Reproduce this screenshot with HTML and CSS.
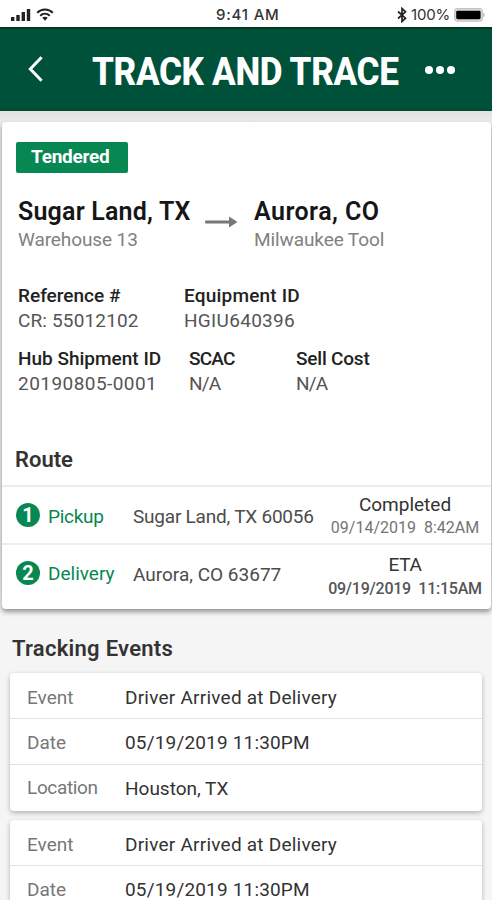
FILE: index.html
```html
<!DOCTYPE html>
<html lang="en">
<head>
    <meta charset="UTF-8">
    <meta name="viewport" content="width=device-width, initial-scale=1.0">
    <title>Track and Trace</title>
    <link rel="stylesheet" href="styles.css">
</head>
<body>

<!-- Status bar -->
<div class="status-bar">
    <div class="signal">
        <svg class="bars" width="20" height="14" viewBox="0 0 20 14">
            <rect x="0" y="9" width="3.4" height="4"/>
            <rect x="5.3" y="7" width="3.4" height="6"/>
            <rect x="10.6" y="4" width="3.4" height="9"/>
            <rect x="15.8" y="1" width="3.4" height="12"/>
        </svg>
        <svg class="wifi" width="18" height="13" viewBox="0 0 18 13" fill="none" stroke="#222" stroke-width="2">
            <path d="M1.2 4.8C5.5 .4 12.5 .4 16.8 4.8"/>
            <path d="M4.2 7.8C7 5.2 11 5.2 13.8 7.8"/>
            <path d="M6.3 9.8Q9 7.5 11.7 9.8L9 12.8z" fill="#222" stroke="none"/>
        </svg>
    </div>
    <span class="clock">9:41 AM</span>
    <div class="power">
        <svg width="10" height="16" viewBox="0 0 10 16" fill="none" stroke="#222" stroke-width="1.7">
            <path d="M1 4.5L8.5 11.2L5 14.5V1.5L8.5 4.8L1 11.5"/>
        </svg>
        <span class="percent">100%</span>
        <svg width="32" height="14" viewBox="0 0 32 14">
            <rect x=".7" y=".7" width="27.6" height="12.4" rx="2.5" fill="#ddd" stroke="#c4c4c4" stroke-width="1.2"/>
            <rect x="2.2" y="2.8" width="24.4" height="8.4" rx="1.4" fill="#000"/>
            <path d="M29.3 4.5Q32 7 29.3 9.5z" fill="#aaa"/>
        </svg>
    </div>
</div>

<!-- Header -->
<div class="header">
    <svg class="back" width="16" height="26" viewBox="0 0 16 26" fill="none" stroke="#fff" stroke-width="3">
        <path d="M14.6 1.2L3.3 13L14.6 24.8"/>
    </svg>
    <h1>TRACK AND TRACE</h1>
    <div class="more"><i></i><i></i><i></i></div>
</div>

<!-- Shipment -->
<div class="panel">
<div class="card shipment">
    <span class="badge">Tendered</span>

    <div class="places">
        <div class="place from">
            <h2>Sugar Land, TX</h2>
            <p>Warehouse 13</p>
        </div>
        <svg class="arrow" width="34" height="12" viewBox="0 0 34 12" fill="#777">
            <rect x="0" y="4.4" width="26" height="3" rx="1"/>
            <path d="M24 .6L32.5 6L24 11.4z"/>
        </svg>
        <div class="place to">
            <h2>Aurora, CO</h2>
            <p>Milwaukee Tool</p>
        </div>
    </div>

    <div class="details two">
        <div>
            <h3>Reference #</h3>
            <p class="cr">CR: 55012102</p>
        </div>
        <div>
            <h3 class="equipment">Equipment ID</h3>
            <p class="equipment-id">HGIU640396</p>
        </div>
    </div>
    <div class="details three">
        <div>
            <h3>Hub Shipment ID</h3>
            <p class="hub-id">20190805-0001</p>
        </div>
        <div>
            <h3 class="scac">SCAC</h3>
            <p class="na">N/A</p>
        </div>
        <div>
            <h3 class="sell">Sell Cost</h3>
            <p class="na">N/A</p>
        </div>
    </div>

    <h3 class="route-title">Route</h3>
    <div class="stop">
        <span class="number">1</span>
        <span class="kind pickup">Pickup</span>
        <span class="city long">Sugar Land, TX 60056</span>
        <div class="when">
            <p class="state">Completed</p>
            <p class="time">09/14/2019&nbsp; 8:42AM</p>
        </div>
    </div>
    <div class="stop delivery">
        <span class="number">2</span>
        <span class="kind">Delivery</span>
        <span class="city">Aurora, CO 63677</span>
        <div class="when">
            <p class="state">ETA</p>
            <p class="time dark">09/19/2019&nbsp; 11:15AM</p>
        </div>
    </div>
</div>
</div>

<!-- Tracking events -->
<h2 class="events-title">Tracking Events</h2>
<div class="card event">
    <div class="row"><span class="label">Event</span><span class="driver">Driver Arrived at Delivery</span></div>
    <div class="row"><span class="label">Date</span><span class="date">05/19/2019 11:30PM</span></div>
    <div class="row"><span class="label location">Location</span><span>Houston, TX</span></div>
</div>
<div class="card event last">
    <div class="row"><span class="label">Event</span><span class="driver">Driver Arrived at Delivery</span></div>
    <div class="row"><span class="label">Date</span><span class="date">05/19/2019 11:30PM</span></div>
</div>

</body>
</html>
```
FILE: styles.css
```css
* {
    box-sizing: border-box;
}
body {
    margin: 0;
    height: 900px;
    overflow: hidden;
    background: #f5f5f5;
    font-family: Roboto, "Liberation Sans", sans-serif;
    font-size: 19px;
    color: #333;
}
h1, h2, h3, p {
    margin: 0;
}
svg {
    display: block;
    flex: none;
}
span, p, h1, h2, h3 {
    white-space: nowrap;
}
.status-bar {
    display: grid;
    grid-template-columns: 216px 181px 1fr;
    align-items: center;
    height: 27px;
    padding-top: 2px;
    background: #fff;
    font-family: Inter, sans-serif;
}
.signal {
    display: flex;
    gap: 5px;
    padding-left: 11px;
    fill: #222;
}
.clock {
    font-size: 15px;
    font-weight: 500;
    letter-spacing: 0.8px;
}
.power {
    display: flex;
    align-items: center;
    gap: 4px;
}
.percent {
    width: 39px;
    font-size: 15px;
    letter-spacing: -0.2px;
}
.header {
    display: flex;
    align-items: center;
    height: 84px;
    padding-left: 27px;
    background: #00513a;
    border-top: 2px solid #003a20;
    border-bottom: 2px solid #044a2c;
}
h1 {
    width: 333px;
    margin-left: 49px;
    padding-top: 5px;
    color: #fff;
    font-size: 39px;
    font-weight: 800;
    line-height: 44px;
    letter-spacing: -0.4px;
    transform: scaleX(0.9);
    transform-origin: 0 50%;
}
.more {
    display: flex;
    gap: 2.6px;
    padding-top: 2px;
}
.more i {
    width: 8.4px;
    height: 8.4px;
    border-radius: 50%;
    background: #fff;
}
.panel {
    padding: 11px 1px 0 2px;
    background: linear-gradient(#e2e2e4, #ebebed 11px, #ebebed 460px, #f5f5f5);
}
.card {
    background: #fff;
    border-radius: 4px;
}
.shipment {
    height: 487px;
    padding-top: 20px;
    box-shadow: 0 3px 5px rgba(0,0,0,0.4);
}
.badge {
    display: block;
    width: 112px;
    height: 31px;
    margin-left: 14px;
    padding-left: 15px;
    border-radius: 2px;
    background: #078751;
    color: #fff;
    font-weight: 700;
    line-height: 30px;
    letter-spacing: -0.25px;
}
.places {
    display: flex;
    height: 89px;
    padding: 24px 0 0 16px;
}
.place h2 {
    color: #161616;
    font-size: 25px;
    font-weight: 600;
    line-height: 30px;
    letter-spacing: 0.2px;
}
.place p {
    color: #818181;
    line-height: 26px;
    letter-spacing: -0.1px;
}
.to h2 {
    letter-spacing: 0.45px;
}
.from {
    width: 187px;
}
.arrow {
    margin: 19px 15px 0 0;
}
.details {
    display: grid;
    height: 84px;
    margin-left: 16px;
    padding-top: 21px;
    color: #555;
}
.details h3 {
    color: #222;
    font-size: 19px;
    font-weight: 500;
    line-height: 25px;
}
.details p {
    line-height: 25px;
}
.details .cr {
    letter-spacing: 0.15px;
}
.details .equipment {
    letter-spacing: 0.2px;
}
.details .equipment-id {
    letter-spacing: 0.3px;
}
.details .hub-id {
    letter-spacing: 0.45px;
}
.details .scac {
    letter-spacing: -0.8px;
}
.details .sell {
    letter-spacing: -0.2px;
}
.details .na {
    letter-spacing: -0.8px;
}
.two {
    grid-template-columns: 166px 1fr;
}
.three {
    grid-template-columns: 171px 107px 1fr;
    height: 63px;
    padding-top: 0;
}
.route-title {
    height: 76px;
    padding: 38px 0 0 13px;
    font-size: 22px;
    font-weight: 600;
    line-height: 26px;
}
.stop {
    display: flex;
    align-items: center;
    height: 58px;
    padding-left: 14px;
    border-top: 2px solid #ececec;
}
.number {
    width: 24px;
    height: 24px;
    margin-right: 8px;
    border-radius: 50%;
    background: #078751;
    color: #fff;
    font-size: 20px;
    font-weight: 700;
    line-height: 25px;
    text-align: center;
}
.kind {
    width: 85px;
    padding-top: 2px;
    color: #078751;
    font-weight: 450;
    line-height: 24px;
}
.pickup {
    padding-top: 4px;
    letter-spacing: -0.3px;
}
.city {
    width: 188px;
    padding-top: 3px;
    color: #4c4c4c;
}
.long {
    letter-spacing: -0.22px;
}
.when {
    width: 168px;
    padding-top: 2px;
    text-align: center;
}
.delivery .when {
    padding-top: 7px;
}
.state {
    line-height: 24px;
}
.delivery .state {
    letter-spacing: -0.3px;
}
.time {
    color: #747474;
    font-size: 16px;
    line-height: 22px;
}
.dark {
    padding-top: 1px;
    color: #555;
    font-weight: 500;
    letter-spacing: -0.25px;
}
.events-title {
    height: 64px;
    padding: 26px 0 0 12px;
    font-size: 22px;
    font-weight: 600;
    line-height: 27px;
    letter-spacing: 0.27px;
}
.event {
    height: 138px;
    margin: 0 10px 9px 10px;
    box-shadow: 0 2px 5px rgba(0,0,0,0.28);
}
.last {
    height: 91px;
    margin-bottom: 0;
}
.row {
    display: flex;
    align-items: center;
    height: 46px;
    padding: 2px 0 0 17px;
    border-top: 1px solid #e2e2e2;
}
.row:first-child {
    height: 45px;
    padding-top: 3px;
    border-top: none;
}
.label {
    width: 98px;
    color: #777;
}
.location {
    padding-bottom: 2px;
    letter-spacing: -0.35px;
}
.driver {
    letter-spacing: 0.23px;
}
.date {
    letter-spacing: 0.17px;
}
```
